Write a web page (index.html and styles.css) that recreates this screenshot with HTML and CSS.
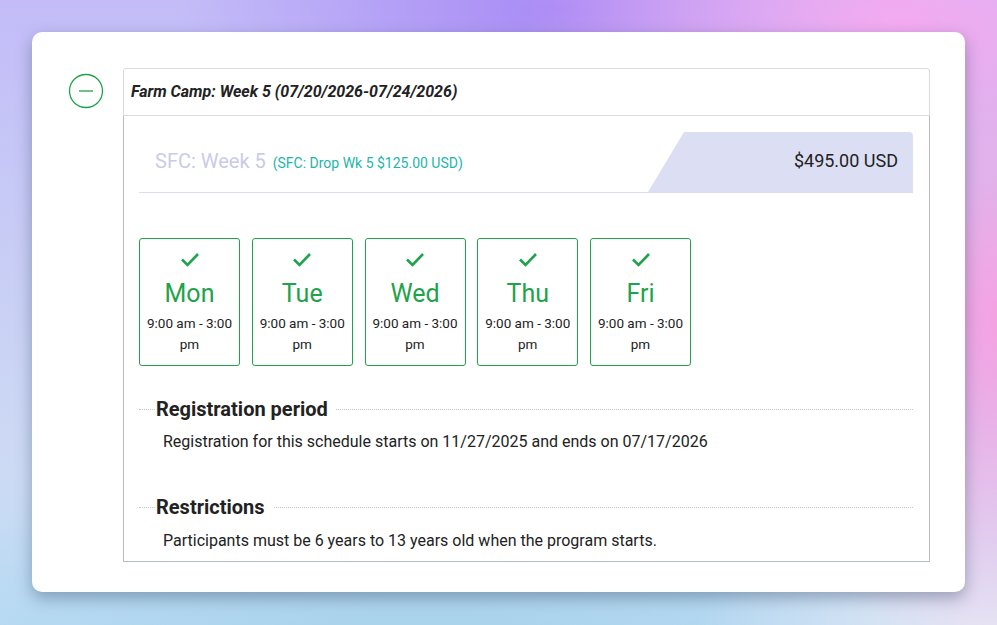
FILE: index.html
```
<!DOCTYPE html>
<html lang="en">
<head>
    <meta charset="UTF-8">
    <meta name="viewport" content="width=device-width, initial-scale=1.0">
    <title>Farm Camp: Week 5</title>
    <link rel="stylesheet" href="styles.css">
</head>
<body>
    <div class="card">
        <div class="session">
            <button class="toggle" aria-label="Collapse">
                <svg width="36" height="36" viewBox="0 0 36 36">
                    <circle cx="18" cy="18" r="16.5" fill="none" stroke="#1fa34a" stroke-width="1.3"/>
                    <line x1="11" y1="18" x2="25" y2="18" stroke="#1fa34a" stroke-width="1.3"/>
                </svg>
            </button>
            <div class="panel">
                <div class="panel-head">Farm Camp: Week 5 (07/20/2026-07/24/2026)</div>
                <div class="panel-body">
                    <div class="price-row">
                        <div class="price-name">
                            <span class="week">SFC: Week 5</span>
                            <span class="drop">(SFC: Drop Wk 5 $125.00 USD)</span>
                        </div>
                        <div class="price-tag">$495.00 USD</div>
                    </div>

                    <div class="days">
                        <div class="day">
                            <svg class="check" width="20" height="16" viewBox="0 0 20 16"><path d="M2 8.5l5.5 5.5L18 3" fill="none" stroke="#1fa34a" stroke-width="2.6"/></svg>
                            <div class="day-name">Mon</div>
                            <div class="day-time">9:00 am - 3:00 pm</div>
                        </div>
                        <div class="day">
                            <svg class="check" width="20" height="16" viewBox="0 0 20 16"><path d="M2 8.5l5.5 5.5L18 3" fill="none" stroke="#1fa34a" stroke-width="2.6"/></svg>
                            <div class="day-name">Tue</div>
                            <div class="day-time">9:00 am - 3:00 pm</div>
                        </div>
                        <div class="day">
                            <svg class="check" width="20" height="16" viewBox="0 0 20 16"><path d="M2 8.5l5.5 5.5L18 3" fill="none" stroke="#1fa34a" stroke-width="2.6"/></svg>
                            <div class="day-name">Wed</div>
                            <div class="day-time">9:00 am - 3:00 pm</div>
                        </div>
                        <div class="day">
                            <svg class="check" width="20" height="16" viewBox="0 0 20 16"><path d="M2 8.5l5.5 5.5L18 3" fill="none" stroke="#1fa34a" stroke-width="2.6"/></svg>
                            <div class="day-name">Thu</div>
                            <div class="day-time">9:00 am - 3:00 pm</div>
                        </div>
                        <div class="day">
                            <svg class="check" width="20" height="16" viewBox="0 0 20 16"><path d="M2 8.5l5.5 5.5L18 3" fill="none" stroke="#1fa34a" stroke-width="2.6"/></svg>
                            <div class="day-name">Fri</div>
                            <div class="day-time">9:00 am - 3:00 pm</div>
                        </div>
                    </div>

                    <div class="info info-first">
                        <h2><span>Registration period</span></h2>
                        <p>Registration for this schedule starts on 11/27/2025 and ends on 07/17/2026</p>
                    </div>

                    <div class="info info-last">
                        <h2><span>Restrictions</span></h2>
                        <p>Participants must be 6 years to 13 years old when the program starts.</p>
                    </div>
                </div>
            </div>
        </div>
    </div>
</body>
</html>
```

FILE: styles.css
```
* {
    box-sizing: border-box;
}

body {
    margin: 0;
    height: 625px;
    padding: 32px;
    font-family: Roboto, "Liberation Sans", Arial, sans-serif;
    color: #222;
    overflow: hidden;
    background:
        radial-gradient(ellipse 300px 330px at 1010px 320px, rgba(246, 160, 226, 1), rgba(246, 160, 226, 0) 100%),
        radial-gradient(ellipse 380px 160px at 900px 20px, rgba(244, 170, 240, 1), rgba(244, 170, 240, 0) 100%),
        radial-gradient(ellipse 300px 220px at 1000px 640px, rgba(232, 232, 244, 1), rgba(232, 232, 244, 0) 100%),
        radial-gradient(ellipse 380px 140px at 560px 10px, rgba(168, 138, 245, 1), rgba(168, 138, 245, 0) 100%),
        radial-gradient(ellipse 560px 220px at 420px 660px, rgba(166, 210, 234, 1), rgba(166, 210, 234, 0) 100%),
        linear-gradient(180deg, #c3bcf8 0%, #c8cdf5 40%, #cddaf4 75%, #bcdcf5 100%);
}

.card {
    background: #fff;
    border-radius: 10px;
    height: 560px;
    padding: 36px 35px 30px 36px;
    box-shadow: 0 6px 16px rgba(40, 60, 90, 0.38);
}

.session {
    display: flex;
    gap: 20px;
}

.toggle {
    border: none;
    background: none;
    padding: 0;
    margin-top: 5px;
    width: 35px;
    height: 36px;
    flex-shrink: 0;
    cursor: pointer;
}

.panel {
    flex-grow: 1;
}

.panel-head {
    height: 48px;
    border: 1px solid #d9d9d9;
    border-radius: 3px 3px 0 0;
    padding: 13px 7px;
    font-size: 16px;
    font-weight: bold;
    font-style: italic;
    color: #222;
}

.panel-body {
    border: 1px solid #b5bcc4;
    border-top: none;
    padding: 16px 16px 0 15px;
    height: 446px;
}

.price-row {
    display: flex;
    height: 61px;
    border-bottom: 1px solid #dcdcf0;
}

.price-name {
    flex-grow: 1;
    padding: 17px 0 0 16px;
}

.week {
    font-size: 20px;
    color: #c9cce6;
    margin-right: 3px;
}

.drop {
    font-size: 14px;
    color: #1eb5a8;
}

.price-tag {
    width: 265px;
    height: 60px;
    background: #dcdff3;
    border-radius: 0 4px 0 0;
    clip-path: polygon(36px 0, 100% 0, 100% 100%, 0 100%);
    text-align: right;
    padding: 18px 15px 0 0;
    font-size: 18px;
    color: #222;
}

.days {
    display: flex;
    gap: 11.75px;
    margin-top: 45px;
}

.day {
    width: 101px;
    height: 128px;
    border: 1px solid #1fa34a;
    border-radius: 3px;
    text-align: center;
    padding-top: 12px;
}

.check {
    display: block;
    margin: 0 auto;
}

.day-name {
    font-size: 25px;
    color: #1fa34a;
    margin-top: 11px;
    line-height: 32px;
}

.day-time {
    font-size: 13.5px;
    line-height: 21px;
    padding: 0 2px;
    margin-top: 3px;
}

.info h2 {
    font-size: 20px;
    font-weight: bold;
    margin: 0;
    position: relative;
    padding-left: 17px;
    line-height: 26px;
}

.info h2::before {
    content: "";
    position: absolute;
    left: 0;
    right: 0;
    top: 13px;
    border-top: 1px dotted #c4c4c4;
}

.info h2 span {
    position: relative;
    background: #fff;
    padding: 0 8px 0 0;
}

.info p {
    margin: 9px 0 0 24px;
    font-size: 16px;
    line-height: 22px;
}

.info-first {
    margin-top: 30px;
}

.info-last {
    margin-top: 41px;
}

.info-last p {
    margin-top: 10px;
}
```
